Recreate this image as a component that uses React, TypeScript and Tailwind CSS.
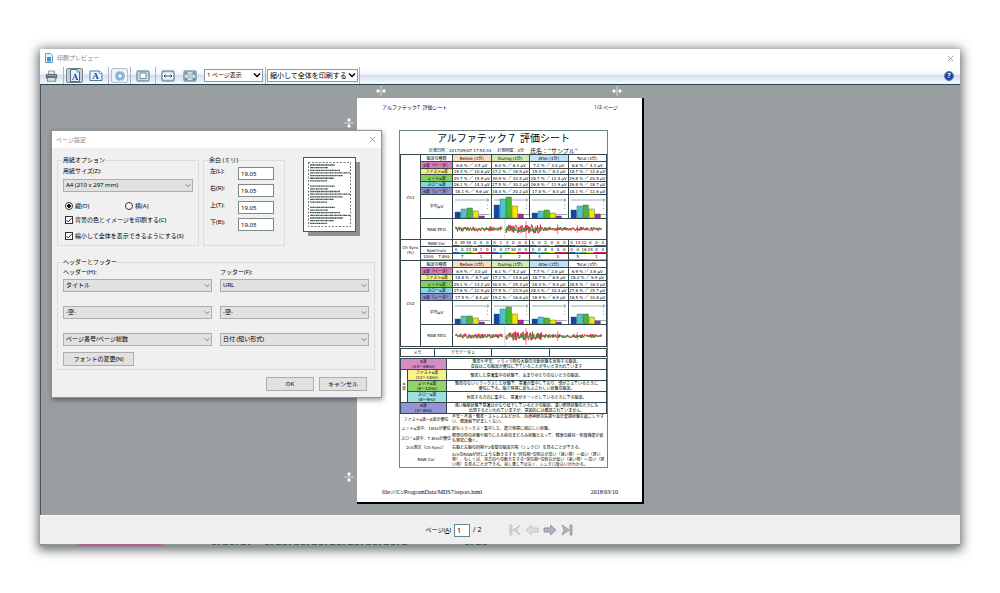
import React from "react";

const JP = "font-['Noto_Sans','Noto_Sans_CJK_JP',sans-serif]";

type ChannelRow = { label: string; color: string; values: string[] };

const periods = [
  { label: "Before (1分)", color: "bg-[#fbdcc6]" },
  { label: "During (1分)", color: "bg-[#d3eab0]" },
  { label: "After (1分)", color: "bg-[#bfe0f5]" },
  { label: "Total (3分)", color: "bg-white" },
];

const channel1: ChannelRow[] = [
  { label: "β波（ベータ）", color: "bg-[#d77cc0]", values: ["6.6 % ／ 3.5 μV", "6.0 % ／ 6.3 μV", "7.2 % ／ 3.0 μV", "6.6 % ／ 4.3 μV"] },
  { label: "ファストα波", color: "bg-[#f6f07a]", values: ["19.4 % ／ 10.6 μV", "17.2 % ／ 18.9 μV", "19.4 % ／ 8.4 μV", "18.7 % ／ 12.6 μV"] },
  { label: "ミッドα波", color: "bg-[#84cf5c]", values: ["29.7 % ／ 15.9 μV", "30.9 % ／ 33.4 μV", "28.7 % ／ 12.4 μV", "29.8 % ／ 20.5 μV"] },
  { label: "スローα波", color: "bg-[#86d6dc]", values: ["26.1 % ／ 14.3 μV", "27.5 % ／ 30.2 μV", "26.8 % ／ 11.9 μV", "26.8 % ／ 18.7 μV"] },
  { label: "θ波（シータ）", color: "bg-[#8d8cd0]", values: ["18.1 % ／ 9.6 μV", "18.4 % ／ 20.2 μV", "17.8 % ／ 8.0 μV", "18.1 % ／ 12.6 μV"] },
];

const channel2: ChannelRow[] = [
  { label: "β波（ベータ）", color: "bg-[#d77cc0]", values: ["6.9 % ／ 3.0 μV", "6.1 % ／ 5.2 μV", "7.7 % ／ 2.6 μV", "6.9 % ／ 3.6 μV"] },
  { label: "ファストα波", color: "bg-[#f6f07a]", values: ["18.8 % ／ 8.7 μV", "17.2 % ／ 14.6 μV", "18.7 % ／ 6.5 μV", "18.2 % ／ 9.9 μV"] },
  { label: "ミッドα波", color: "bg-[#84cf5c]", values: ["29.1 % ／ 13.2 μV", "30.0 % ／ 25.3 μV", "26.4 % ／ 9.4 μV", "28.5 % ／ 16.0 μV"] },
  { label: "スローα波", color: "bg-[#86d6dc]", values: ["27.6 % ／ 12.9 μV", "27.5 % ／ 23.9 μV", "28.3 % ／ 10.4 μV", "27.8 % ／ 15.7 μV"] },
  { label: "θ波（シータ）", color: "bg-[#8d8cd0]", values: ["17.5 % ／ 8.4 μV", "19.2 % ／ 16.6 μV", "18.9 % ／ 6.9 μV", "18.5 % ／ 10.6 μV"] },
];

const bars1 = [[6, 9, 10, 7, 2], [13, 19, 21, 12, 4], [5, 7, 8, 5, 2], [8, 12, 13, 9, 4]];
const bars2 = [[5, 8, 8, 6, 2], [10, 15, 17, 10, 4], [5, 7, 6, 4, 2], [7, 10, 10, 7, 3]];
const barFills = ["#1346a8", "#4cc3d0", "#4cb82e", "#f4e400", "#b5239a"];

const correlation = [[0, 39, 30, 0, 0, 0], [0, 1, 3, 0, 0, 0], [0, 0, 2, 0, 0, 0], [0, 13, 12, 0, 0, 0]];
const spectrum = [[0, 0, 23, 38, 1, 0], [0, 0, 17, 30, 0, 0], [0, 0, 8, 4, 0, 0], [0, 0, 16, 24, 0, 0]];
const resonance = [[7, 1], [4, 2], [4, 0], [5, 1]];
const stripes = ["bg-[#2456b8]", "bg-[#4cc3d0]", "bg-[#4cb82e]", "bg-[#f0e020]", "bg-[#b5239a]", "bg-[#e02038]"];

const cell = "border border-[#35464c] p-0 whitespace-nowrap font-normal";

function BarChart({ data }: { data: number[] }) {
  return (
    <svg viewBox="0 0 38 22" className="mx-auto block h-[22px] w-[38px]">
      <path d="M2 4H35M2 18.5H37" stroke="#7f9a9c" strokeWidth="0.8" />
      <path d="M34 2.5L36 4L34 5.500M34.500 8.500V9.500M34.500 12V13" stroke="#66787c" strokeWidth="0.7" fill="none" />
      {data.map((h, i) => (
        <rect key={i} x={2 + i * 6} y={22 - h} width="5.4" height={h} fill={barFills[i]} stroke="#2b5558" strokeWidth="0.4" />
      ))}
    </svg>
  );
}

function wave(seed: number, gain: number) {
  let s = seed;
  let d = "M3 10";
  for (let x = 3; x < 151; x += 0.5) {
    if (x > 50 && x < 54) {
      d += `M${x.toFixed(1)} 10`;
      continue;
    }
    s = (s * 16807) % 2147483647;
    const r = (s / 2147483647) * 2 - 1;
    const env = x < 51 ? 2.2 : x < 90 ? 4 : x < 102 ? 2.2 : 1.8;
    d += `L${x.toFixed(1)} ${(10 + r * env * gain).toFixed(1)}`;
  }
  return d;
}

function Eeg({ seed, label }: { seed: number; label: string }) {
  return (
    <svg viewBox="0 0 155 20" preserveAspectRatio="none" className="block h-5 w-full" role="img" aria-label={label}>
      <path d={wave(seed, 1.1)} stroke="#e0183c" strokeWidth="0.9" fill="none" />
      <path d={wave(seed + 91, 0.6)} stroke="#2f9a32" strokeWidth="0.8" fill="none" />
      <path d="M74 2V19M106 5V15M126 6V14" stroke="#e0284a" strokeWidth="0.6" />
      <path d="M52.500 0V20" stroke="#a9b4b6" strokeWidth="0.5" />
    </svg>
  );
}

function Channel({ name, rows, bars, seed, tall }: { name: string; rows: ChannelRow[]; bars: number[][]; seed: number; tall: boolean }) {
  return (
    <>
      <tr className="h-[7px]">
        <th rowSpan={8} className={cell}>{name}</th>
        <th className={cell}>脳波の種類</th>
        {periods.map((p) => (
          <th key={p.label} className={`${cell} ${p.color}`}>{p.label}</th>
        ))}
      </tr>
      {rows.map((r, i) => (
        <tr key={r.label} className={i % 2 ? "h-[6px]" : "h-[7px]"}>
          <th className={`${cell} ${r.color}`}>{r.label}</th>
          {r.values.map((v, j) => (
            <td key={j} className={cell}>{v}</td>
          ))}
        </tr>
      ))}
      <tr className="h-6">
        <th className={cell}>平均μV</th>
        {bars.map((b, i) => (
          <td key={i} className={`${cell} align-bottom`}>
            <BarChart data={b} />
          </td>
        ))}
      </tr>
      <tr className={tall ? "h-[22px]" : "h-[21px]"}>
        <th className={cell}>RAW EEG</th>
        <td colSpan={4} className={cell}>
          <Eeg seed={seed} label={`${name} RAW EEG`} />
        </td>
      </tr>
    </>
  );
}

function Stripe({ values }: { values: number[] }) {
  return (
    <div className="grid grid-cols-6">
      {values.map((v, i) => (
        <div key={i} className="leading-[5px]">
          {v}
          <div className={`h-px ${stripes[i]}`} />
        </div>
      ))}
    </div>
  );
}

function SyncRows() {
  return (
    <>
      <tr className="h-[7px]">
        <th rowSpan={3} className={cell}>Ch Sync<br />(%)</th>
        <th className={cell}>RAW Cor</th>
        {correlation.map((v, i) => (
          <td key={i} className={cell}><Stripe values={v} /></td>
        ))}
      </tr>
      <tr className="h-[7px]">
        <th className={cell}>Spectrum</th>
        {spectrum.map((v, i) => (
          <td key={i} className={cell}><Stripe values={v} /></td>
        ))}
      </tr>
      <tr className="h-[7px]">
        <th className={cell}>
          <div className="flex justify-around leading-[5px]"><span>10Hz</span><span>7.8Hz</span></div>
          <div className="flex"><div className="h-px flex-1 bg-[#8b9596]" /><div className="h-px flex-1 bg-[#e8a420]" /></div>
        </th>
        {resonance.map((v, i) => (
          <td key={i} className={cell}>
            <div className="grid grid-cols-2 leading-[5px]">
              <div>{v[0]}<div className="h-px bg-[#8b9596]" /></div>
              <div>{v[1]}<div className="h-px bg-[#e8a420]" /></div>
            </div>
          </td>
        ))}
      </tr>
    </>
  );
}

const legend = [
  { name: "β波", range: "(14～26Hz)", color: "bg-[#d78cc6]", lines: ["緊張や不安、イライラ時の大脳の活動状態を反映する脳波。", "普段はこの脳波が優位にでていることが多いと言われています"] },
  { name: "ファストα波", range: "(12～14Hz)", color: "bg-[#f7f28a]", lines: ["緊張した意識集中の状態で、あまりゆとりのないときの脳波。"] },
  { name: "ミッドα波", range: "(9～12Hz)", color: "bg-[#92d36a]", lines: ["緊張のないリラックスした状態で、意識が集中しており、頭がさえているときに", "優位にでる。脳力発揮に最もふさわしい状態の脳波。"] },
  { name: "スローα波", range: "(8～9Hz)", color: "bg-[#9adfe4]", lines: ["休息する方向に集中し、意識がボーッとしているときにでる脳波。"] },
  { name: "θ波", range: "(4～8Hz)", color: "bg-[#9594d2]", lines: ["浅い睡眠状態で意識はかなり低下しているときの脳波。深い瞑想状態のときにも", "出現するといわれていますが、意図的には確認されていません。"] },
];

const notes = [
  ["ファストα波～β波が優位", "不安・不満・緊張・ストレスなどから、自律神経の失調や血圧変調状態を起こしやすい、健康面で好ましくない。"],
  ["ミッドα波中、10Hzが優位", "最もリラックス・集中した、能力発揮に相応しい状態。"],
  ["スローα波中、7.8Hzが優位", "瞑想の時の状態や眠りに入る前のまどろみ状態となって、健康の維持・恢復機能が最も容易に働く。"],
  ["2ch測定（Ch Sync）", "右脳と左脳の同期や2者間の脳波共鳴（シンクロ）を見ることができる。"],
  ["RAW Cor", "2chのRAWが同じような動きをする“同位相”の割合が高い（速い帯）～低い（遅い帯）、もしくは、逆方向への動きをする“逆位相”の割合が低い（速い帯）～高い（遅い帯）を見ることができる。良し悪しではなく、シンクロ度合いがわかる。"],
];

function Report() {
  return (
    <article className="ml-[42px] w-[209px] border border-[#6f8285] font-['DejaVu_Sans','Noto_Sans_CJK_JP',sans-serif] text-[4px] leading-[5px] text-black">
      <h1 className="mt-px text-center text-[10px] leading-[14px]">アルファテック７ 評価シート</h1>
      <p className="flex h-2 items-center justify-center gap-[6px] whitespace-nowrap">
        <span>計測日時：2017/09/07 17:54:33</span>
        <span>計測時間：3分</span>
        <span className="text-[6px]">氏名：“サンプル”</span>
      </p>
      <table className="w-full table-fixed border-collapse text-center">
        <colgroup>
          <col className="w-5" />
          <col className="w-8" />
          <col /><col /><col /><col />
        </colgroup>
        <tbody>
          <Channel name="Ch1" rows={channel1} bars={bars1} seed={1234} tall={false} />
          <SyncRows />
          <Channel name="Ch2" rows={channel2} bars={bars2} seed={9876} tall />
        </tbody>
      </table>
      <table className="mt-px w-full table-fixed border-collapse text-center">
        <colgroup><col className="w-[34px]" /><col className="w-[57px]" /><col className="w-[58px]" /><col /></colgroup>
        <tbody>
          <tr className="h-2">
            <th className={cell}>メモ</th>
            <td className={cell}>デモデータ２</td>
            <td className={cell} />
            <td className={cell} />
          </tr>
        </tbody>
      </table>
      <table className="mt-px w-full table-fixed border-collapse text-center">
        <colgroup><col className="w-[7px]" /><col className="w-[39px]" /><col /></colgroup>
        <tbody>
          {legend.map((l, i) => (
            <tr key={l.name} className="h-[11px]">
              {i === 1 && <th rowSpan={3} className={cell}>α<br />波</th>}
              <th colSpan={i === 0 || i === 4 ? 2 : 1} className={`${cell} ${l.color}`}>{l.name}<br />{l.range}</th>
              <td className={cell}>
                {l.lines.map((t) => <div key={t}>{t}</div>)}
              </td>
            </tr>
          ))}
        </tbody>
      </table>
      <dl className="grid grid-cols-[52px_1fr] items-center gap-y-0.5">
        {notes.map(([k, v]) => (
          <React.Fragment key={k}>
            <dt className="text-center whitespace-nowrap">{k}</dt>
            <dd className="pr-px">{v}</dd>
          </React.Fragment>
        ))}
      </dl>
    </article>
  );
}

function Handle({ className }: { className: string }) {
  return (
    <svg viewBox="0 0 10 10" className={`absolute size-[10px] ${className}`} aria-hidden="true">
      <path d="M5 0V10" stroke="#e4e8e9" strokeWidth="0.8" />
      <path d="M0 5L2 3L4 5L2 7ZM10 5L8 3L6 5L8 7Z" fill="#fff" />
    </svg>
  );
}

function PreviewPage() {
  return (
    <div className={`relative w-[287px] border-r-2 border-b-2 border-black bg-white pt-[6px] pb-[6px] ${JP}`}>
      <Handle className="-top-3 left-[19px]" />
      <Handle className="-top-3 left-[255px]" />
      <Handle className="top-5 -left-[13px] rotate-90" />
      <Handle className="top-[374px] -left-[13px] rotate-90" />
      <header className="mb-[18px] flex h-2 items-center justify-between pr-6 pl-[25px] text-[5px] text-black">
        <span>アルファテック7&nbsp; 評価シート</span>
        <span><span className="text-[#8d2020]">1</span>/2 ページ</span>
      </header>
      <Report />
      <footer className="mt-5 flex h-2 items-center justify-between pr-6 pl-[25px] font-['Liberation_Serif',serif] text-[6px] text-black">
        <span>file:///C:/ProgramData/MDS7/report.html</span>
        <span>2018/03/10</span>
      </footer>
    </div>
  );
}

function Chevron({ className }: { className: string }) {
  return (
    <svg viewBox="0 0 8 6" className={`pointer-events-none absolute ${className}`} aria-hidden="true">
      <path d="M1 1.500L4 4.500L7 1.500" fill="none" stroke="currentColor" strokeWidth="1" />
    </svg>
  );
}

function Dropdown({ label, value, id }: { label: string; value: string; id?: string }) {
  return (
    <div className="relative h-[13px]">
      <select id={id} aria-label={id ? undefined : label} className="block h-[13px] w-full appearance-none border border-[#adadad] bg-[#e1e1e1] pl-0.5 text-[6px] leading-[11px]">
        <option>{value}</option>
      </select>
      <Chevron className="top-1 right-[2px] h-[5px] w-[6px] text-[#555]" />
    </div>
  );
}

const check = "size-2 shrink-0 appearance-none border border-[#333] bg-white";

function Tick() {
  return (
    <svg viewBox="0 0 8 8" className="pointer-events-none absolute top-0 left-0 size-2" aria-hidden="true">
      <path d="M1.500 4L3.300 6L6.700 2" fill="none" stroke="#222" strokeWidth="0.9" />
    </svg>
  );
}

function PaperThumb() {
  const rows = Array.from({ length: 23 }, (_, i) => i);
  const widths = [25, 18, 30, 40, 33, 24, 17, 0];
  return (
    <svg viewBox="0 0 57 79" className="mt-px ml-[14px] h-[79px] w-[57px] shrink-0" role="img" aria-label="ページのプレビュー">
      <rect x="5" y="5" width="52" height="74" fill="#8d9294" />
      <rect x="0.5" y="0.5" width="52" height="74" fill="#fff" stroke="#4d5658" />
      <rect x="5.500" y="5.500" width="42" height="64" fill="none" stroke="#555" strokeDasharray="2 1.500" strokeWidth="0.8" />
      {rows.map((i) => (
        <path key={i} d={`M7 ${8 + i * 2.650}h${widths[i % 8]}`} stroke="#3f5148" strokeWidth="1.300" strokeDasharray={i % 2 ? "0.700 0.300 2 0.300 1 0.400" : "1.200 0.300 0.600 0.300 1.700 0.300"} />
      ))}
    </svg>
  );
}

function CloseIcon() {
  return (
    <svg viewBox="0 0 8 8" className="size-[7px]" aria-hidden="true">
      <path d="M1 1L7 7M7 1L1 7" stroke="#888" strokeWidth="0.9" />
    </svg>
  );
}

const pushButton = "h-[14px] border border-[#adadad] bg-[#e1e1e1] text-center text-[6px] leading-[12px]";

function PageSetupDialog() {
  return (
    <section role="dialog" aria-label="ページ設定" className={`absolute top-[45px] left-[10px] w-[331px] border border-[#8f9496] bg-[#f0f0f0] text-[6px] leading-[8px] text-black shadow-[1px_2px_5px_rgba(0,0,0,0.4)] ${JP}`}>
      <header className="flex h-[17px] items-center justify-between bg-white px-1 text-[#888]">
        <h2>ページ設定</h2>
        <button type="button" aria-label="閉じる" className="mr-px"><CloseIcon /></button>
      </header>
      <form className="px-[5px] pt-2 pb-[6px]">
        <div className="flex items-start gap-1">
          <fieldset className="w-[142px] border border-[#dcdcdc] px-[5px] pb-[5px]">
            <legend>用紙オプション</legend>
            <label htmlFor="paper" className="mt-[3px] mb-1 block">用紙サイズ(Z):</label>
            <Dropdown id="paper" label="用紙サイズ" value="A4 (210 x 297 mm)" />
            <div className="mt-[10px] grid grid-cols-[60px_1fr] pl-0.5">
              <label className="flex items-center gap-[2px]">
                <input type="radio" name="orientation" defaultChecked className={`${check} rounded-full bg-[radial-gradient(circle,#111_40%,#fff_50%)]`} />縦(O)
              </label>
              <label className="flex items-center gap-[2px]">
                <input type="radio" name="orientation" className={`${check} rounded-full`} />横(A)
              </label>
            </div>
            <label className="relative mt-[6px] ml-0.5 flex items-center gap-[2px] whitespace-nowrap">
              <input type="checkbox" defaultChecked className={check} /><Tick />背景の色とイメージを印刷する(C)
            </label>
            <label className="relative mt-2 ml-0.5 flex items-center gap-[2px] whitespace-nowrap">
              <input type="checkbox" defaultChecked className={check} /><Tick />縮小して全体を表示できるようにする(S)
            </label>
          </fieldset>
          <fieldset className="h-[90px] w-[82px] border border-[#dcdcdc] px-[5px]">
            <legend>余白 (ミリ)</legend>
            <div className="mt-[3px] grid gap-1 pl-px">
              {["左(L):", "右(R):", "上(T):", "下(B):"].map((t) => (
                <label key={t} className="grid h-[13px] grid-cols-[28px_36px]">
                  <span>{t}</span>
                  <input defaultValue="19.05" className="h-[13px] w-9 border border-[#7a8a90] bg-white pl-[2px]" />
                </label>
              ))}
            </div>
          </fieldset>
          <PaperThumb />
        </div>
        <fieldset className="mt-3 w-[317px] border border-[#dcdcdc] px-[5px] pb-[3px]">
          <legend>ヘッダーとフッター</legend>
          <div className="mt-0.5 grid grid-cols-[149px_149px] gap-x-2">
            <label htmlFor="header1" className="mb-[3px]">ヘッダー(H):</label>
            <label htmlFor="footer1" className="mb-[3px]">フッター(F):</label>
          </div>
          <div className="grid grid-cols-[149px_149px] gap-x-2 gap-y-[14px]">
            <Dropdown id="header1" label="ヘッダー" value="タイトル" />
            <Dropdown id="footer1" label="フッター" value="URL" />
            <Dropdown label="ヘッダー中央" value="-空-" />
            <Dropdown label="フッター中央" value="-空-" />
            <Dropdown label="ヘッダー右" value="ページ番号/ページ総数" />
            <Dropdown label="フッター右" value="日付 (短い形式)" />
          </div>
          <button type="button" className={`${pushButton} mt-[6px] block w-[71px]`}>フォントの変更(N)</button>
        </fieldset>
        <div className="mt-[7px] mr-[9px] flex justify-end gap-[5px]">
          <button type="button" className={`${pushButton} w-12`}>OK</button>
          <button type="button" className={`${pushButton} w-12`}>キャンセル</button>
        </div>
      </form>
    </section>
  );
}

function Separator() {
  return <div className="h-[17px] w-px bg-[#a9b4c6]" />;
}

function IconFrame({ children }: { children: React.ReactNode }) {
  return (
    <svg viewBox="0 0 14 12" className="h-3 w-[14px]" aria-hidden="true">
      <rect x="1" y="1" width="12" height="10" rx="0.8" fill="#cfe2ec" stroke="#4a7388" />
      {children}
    </svg>
  );
}

function Toolbar() {
  return (
    <div role="toolbar" aria-label="印刷" className={`flex h-[18px] items-center justify-between border-b border-[#27484c] bg-[linear-gradient(#fff_0%,#f5f7fc_40%,#d6def2_50%,#eef1fa_85%,#f4f6fc_100%)] pr-[6px] pl-[5px] text-[7px] ${JP}`}>
      <div className="flex items-center">
        <button type="button" aria-label="印刷" className="mr-[5px]">
          <svg viewBox="0 0 13 12" className="h-3 w-[13px]" aria-hidden="true">
            <path d="M3.500 1H9.500V5H3.500Z" fill="#dfe8e8" stroke="#67787b" strokeWidth="0.7" />
            <rect x="0.8" y="4" width="11.400" height="4.800" rx="1" fill="#5e6e70" />
            <path d="M2 5.500H11" stroke="#a6b2b2" strokeWidth="0.8" />
            <path d="M3 7.500H10L10.800 11.300H2.200Z" fill="#d9e2e2" stroke="#56676a" strokeWidth="0.7" />
            <circle cx="10.500" cy="6.800" r="0.600" fill="#6fd060" />
          </svg>
        </button>
        <Separator />
        <button type="button" aria-label="縦" aria-pressed="true" className="ml-0.5 grid h-[15px] w-[17px] place-items-center rounded-[2px] border border-[#77838c] bg-[#c6d0d8]">
          <svg viewBox="0 0 10 13" className="h-[13px] w-[10px]" aria-hidden="true">
            <path d="M0.500 0.500H7L9.500 3V12.500H0.500Z" fill="#e8f4fb" stroke="#3f7290" />
            <path d="M7 0.500V3H9.500" fill="#fff" stroke="#3f7290" strokeWidth="0.7" />
            <text x="5" y="10.500" textAnchor="middle" fontSize="9" fontWeight="bold" fontFamily="Liberation Serif" fill="#123f9a">A</text>
          </svg>
        </button>
        <button type="button" aria-label="横" className="mr-[5px] ml-[6px]">
          <svg viewBox="0 0 14 11" className="h-[11px] w-[14px]" aria-hidden="true">
            <path d="M1 1H10.500L13 3.500V10.500H1Z" fill="#e8f4fb" stroke="#4a7d98" />
            <path d="M10.500 1V3.500H13" fill="#fff" stroke="#4a7d98" strokeWidth="0.7" />
            <text x="6.500" y="9" textAnchor="middle" fontSize="9" fontWeight="bold" fontFamily="Liberation Serif" fill="#123f9a">A</text>
          </svg>
        </button>
        <Separator />
        <button type="button" aria-label="ページ設定" className="mx-[2px] grid h-[15px] w-[17px] place-items-center rounded-[2px] border border-[#b4bfcd] bg-[#eef2f8]">
          <svg viewBox="0 0 12 12" className="size-3" aria-hidden="true">
            <circle cx="6" cy="6" r="4.500" fill="none" stroke="#86b2cf" strokeWidth="1.300" strokeDasharray="1.400 0.960" />
            <circle cx="6" cy="6" r="2.900" fill="#d6eaf6" stroke="#7fb0d0" strokeWidth="2.200" />
            <circle cx="6" cy="6" r="1.500" fill="#f2f8fc" />
          </svg>
        </button>
        <Separator />
        <button type="button" aria-label="ヘッダーとフッター" className="mx-[5px]">
          <IconFrame>
            <rect x="4" y="3" width="6" height="5.500" fill="#fff" stroke="#4a7388" strokeWidth="0.8" />
          </IconFrame>
        </button>
        <Separator />
        <button type="button" aria-label="幅に合わせる" className="mr-2 ml-[5px]">
          <IconFrame>
            <rect x="2" y="3.500" width="10" height="5" fill="#fff" />
            <path d="M3 6H11M4.500 4.500L3 6L4.500 7.500M9.500 4.500L11 6L9.500 7.500" fill="none" stroke="#1d3540" strokeWidth="0.9" />
          </IconFrame>
        </button>
        <button type="button" aria-label="全体表示" className="mr-[7px]">
          <IconFrame>
            <rect x="4" y="3.500" width="6" height="5.500" fill="#b8ccd6" />
            <path d="M2.500 4.500V2.800H4.500M9.500 2.800H11.500V4.500M11.500 8V9.700H9.500M4.500 9.700H2.500V8M3 3.200L4.500 4.500M11 3.200L9.500 4.500M3 9.300L4.500 8M11 9.300L9.500 8" fill="none" stroke="#41606e" strokeWidth="0.8" />
          </IconFrame>
        </button>
        <div className="relative mr-[2px]">
          <select aria-label="表示ページ数" className="block h-[13px] w-[59px] appearance-none border border-[#8d99a3] bg-white pl-[2px] text-[6px] leading-[11px]">
            <option>1 ページ表示</option>
          </select>
          <Chevron className="top-[3px] right-[2px] h-[6px] w-[8px] text-black [&>path]:stroke-[1.5]" />
        </div>
        <Separator />
        <div className="relative mx-px">
          <select aria-label="印刷サイズの変更" className="block h-[13px] w-[91px] appearance-none border border-[#8d99a3] bg-white pl-[2px] text-[7px] leading-[11px]">
            <option>縮小して全体を印刷する</option>
          </select>
          <Chevron className="top-[3px] right-[2px] h-[6px] w-[8px] text-black [&>path]:stroke-[1.5]" />
        </div>
        <Separator />
      </div>
      <button type="button" aria-label="ヘルプ" className="grid size-[10px] place-items-center rounded-full border border-[#6c7b96] bg-[#1c47a8] text-[7px] leading-none font-bold text-white">?</button>
    </div>
  );
}

function PageNavigation() {
  return (
    <footer className={`flex h-[29px] items-center justify-center border-t border-[#fafafa] bg-[#efefef] text-[6px] text-black ${JP}`}>
      <label className="mr-7 flex items-center">
        <span>ページ(<u>A</u>)</span>
        <input defaultValue="1" className="mx-[3px] h-[13px] w-4 border border-[#5e8a90] bg-white pl-[2px] text-[7px]" />
        <span className="text-[7px]">/ 2</span>
      </label>
      <div className="mr-px flex items-center gap-1">
        <button type="button" aria-label="最初のページ" disabled>
          <svg viewBox="0 0 12 12" className="size-3" aria-hidden="true">
            <path d="M1 1H3V11H1ZM11 1L4 6L11 11L8 6Z" fill="#d3d5da" stroke="#bcc0c8" strokeWidth="0.8" />
          </svg>
        </button>
        <button type="button" aria-label="前のページ" disabled>
          <svg viewBox="0 0 14 12" className="h-3 w-[14px]" aria-hidden="true">
            <path d="M1 6L6.500 1.200V4H13V8H6.500V10.800Z" fill="#dcdee2" stroke="#bcc0c8" strokeWidth="0.9" />
          </svg>
        </button>
        <button type="button" aria-label="次のページ">
          <svg viewBox="0 0 14 12" className="h-3 w-[14px]" aria-hidden="true">
            <path d="M13 6L7.500 1.200V4H1V8H7.500V10.800Z" fill="#b3b6bf" stroke="#868b96" strokeWidth="0.9" />
          </svg>
        </button>
        <button type="button" aria-label="最後のページ">
          <svg viewBox="0 0 12 12" className="size-3" aria-hidden="true">
            <path d="M1 1L8.500 6L1 11L3 6ZM9 1H11V11H9Z" fill="#b3b6bf" stroke="#8f94a0" strokeWidth="0.8" />
          </svg>
        </button>
      </div>
    </footer>
  );
}

export default function App() {
  return (
    <main className="min-h-screen bg-white px-10 py-[49px]">
      <div className="bg-white shadow-[0_2px_10px_2px_rgba(40,45,50,0.7)]">
        <header className={`flex h-[18px] items-center justify-between bg-white pr-[6px] pl-[5px] text-[6px] text-[#777] ${JP}`}>
          <h1 className="flex items-center gap-1">
            <svg viewBox="0 0 8 10" className="h-[10px] w-2" aria-hidden="true">
              <path d="M0.500 0.500H5.500L7.500 2.500V9.500H0.500Z" fill="#e3f2fb" stroke="#5f9fc4" />
              <path d="M2 4H6V8.500H2Z" fill="#3e93c9" />
            </svg>
            印刷プレビュー
          </h1>
          <button type="button" aria-label="閉じる"><CloseIcon /></button>
        </header>
        <Toolbar />
        <div className="relative flex justify-center border-l border-[#4b5558] bg-[#999ea1] pt-[13px] pb-[11px]">
          <PreviewPage />
          <PageSetupDialog />
        </div>
        <PageNavigation />
        <svg viewBox="0 0 920 2" preserveAspectRatio="none" className="block h-0.5 w-full bg-[#8b9596]" aria-hidden="true">
          <rect x="37" width="86" height="2" fill="#b5648f" />
          <path d="M172 0.500H210M225 0.500H368M425 0.500H447" stroke="#4a585a" strokeDasharray="4 2 2 3 5 2" />
        </svg>
      </div>
    </main>
  );
}
